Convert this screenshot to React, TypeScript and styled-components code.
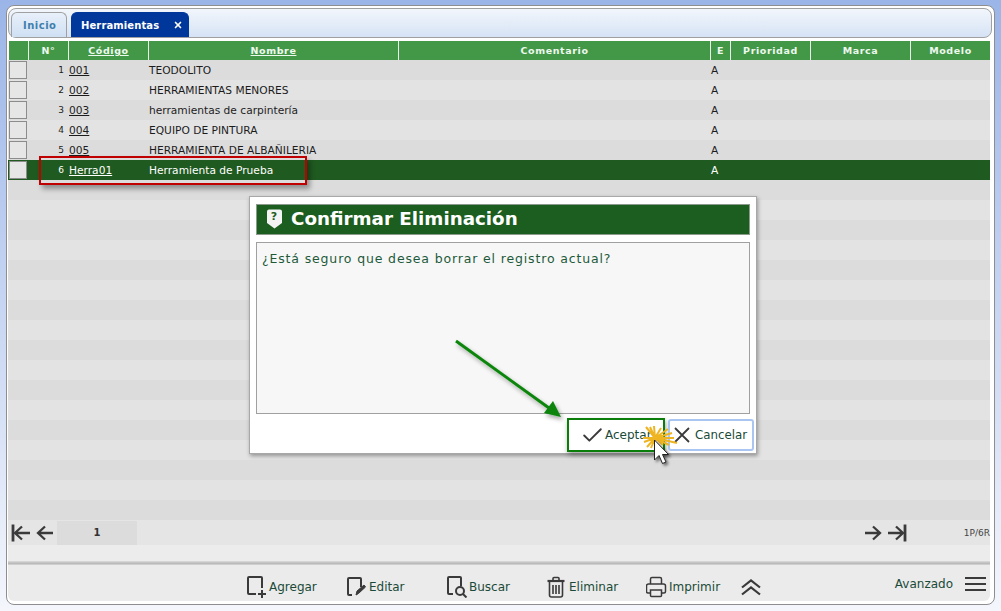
import React from 'react'
import styled, { createGlobalStyle } from 'styled-components'
import { Check, X } from 'lucide-react'

const COLS = '20px 40px 80px 250px 312px 20px 80px 100px 80px'

const records = [
  { n: 1, code: '001', name: 'TEODOLITO' },
  { n: 2, code: '002', name: 'HERRAMIENTAS MENORES' },
  { n: 3, code: '003', name: 'herramientas de carpintería' },
  { n: 4, code: '004', name: 'EQUIPO DE PINTURA' },
  { n: 5, code: '005', name: 'HERRAMIENTA DE ALBAÑILERIA' },
  { n: 6, code: 'Herra01', name: 'Herramienta de Prueba' },
]

const App = () => {
  const blanks = Array.from({ length: 17 }, (_, i) => i + 6)
  return (
    <>
      <GlobalStyle />
      <Frame>
        <TabBar>
          <Tab>Inicio</Tab>
          <Tab $active>
            Herramientas
            <X size={10} strokeWidth={4} />
          </Tab>
        </TabBar>
        <Grid>
          <HeadRow>
            <HeadCell />
            <HeadCell>N°</HeadCell>
            <HeadCell $link>Código</HeadCell>
            <HeadCell $link>Nombre</HeadCell>
            <HeadCell>Comentario</HeadCell>
            <HeadCell>E</HeadCell>
            <HeadCell>Prioridad</HeadCell>
            <HeadCell>Marca</HeadCell>
            <HeadCell>Modelo</HeadCell>
          </HeadRow>
          {records.map((r, i) => (
            <Row key={r.n} $odd={i % 2 === 0} $selected={r.n === 6}>
              <Selector />
              <NumCell>{r.n}</NumCell>
              <Cell>
                <u>{r.code}</u>
              </Cell>
              <Cell>{r.name}</Cell>
              <Cell />
              <Cell>A</Cell>
              <Cell />
              <Cell />
              <Cell />
            </Row>
          ))}
          {blanks.map((i) => (
            <Row key={i} $odd={i % 2 === 0} />
          ))}
        </Grid>
        <Pager>
          <PagerIcon>
            <PagerArrow $toLine />
          </PagerIcon>
          <PagerIcon>
            <PagerArrow />
          </PagerIcon>
          <PageNumber>1</PageNumber>
          <PagerSpacer />
          <PagerIcon>
            <PagerArrow $flip />
          </PagerIcon>
          <PagerIcon>
            <PagerArrow $flip $toLine />
          </PagerIcon>
          <PageInfo>1P/6R</PageInfo>
        </Pager>
        <Spacer />
        <Divider />
        <Toolbar>
          <ToolGroup>
            <ToolButton $width={100}>
              <AddIcon />
              Agregar
            </ToolButton>
            <ToolButton $width={100}>
              <EditIcon />
              Editar
            </ToolButton>
            <ToolButton $width={100}>
              <SearchIcon />
              Buscar
            </ToolButton>
            <ToolButton $width={100} $gap={2}>
              <TrashIcon />
              Eliminar
            </ToolButton>
            <ToolButton $width={95} $gap={2}>
              <PrintIcon />
              Imprimir
            </ToolButton>
            <ChevronsIcon />
          </ToolGroup>
          <Advanced>
            Avanzado
            <BurgerIcon />
          </Advanced>
        </Toolbar>

        <RedMark />
        <Dialog>
          <DialogTitle>
            <ShieldIcon />
            Confirmar Eliminación
          </DialogTitle>
          <DialogBody>¿Está seguro que desea borrar el registro actual?</DialogBody>
          <DialogActions>
            <DialogButton $variant="accept">
              <Check size={25} strokeWidth={1.8} color="#3a3a3a" />
              Aceptar
            </DialogButton>
            <DialogButton $variant="cancel">
              <CloseIcon />
              Cancelar
            </DialogButton>
          </DialogActions>
        </Dialog>
        <GreenArrow />
        <ClickCursor />
      </Frame>
    </>
  )
}

const PagerArrow = ({ $flip, $toLine }: { $flip?: boolean; $toLine?: boolean }) => (
  <ArrowGlyph $flip={$flip} width="24" height="20" viewBox="0 0 24 20" fill="none" stroke="#3a3a3a">
    {$toLine ? (
      <>
        <path d="M4 1.5v17" strokeWidth="2.8" />
        <path d="M6 10h15M13 3.5L6 10l7 6.5" strokeWidth="2.3" />
      </>
    ) : (
      <path d="M5 10h15M12 3.5L5 10l7 6.5" strokeWidth="2.3" />
    )}
  </ArrowGlyph>
)

const AddIcon = () => (
  <svg width="22" height="22" viewBox="0 0 22 22" fill="none" stroke="#3a3a3a" strokeWidth="2">
    <path d="M10 18H3a1 1 0 0 1-1-1V2a1 1 0 0 1 1-1h12a1 1 0 0 1 1 1v10" />
    <path d="M12 18h8M16 14v8" />
  </svg>
)

const EditIcon = () => (
  <svg width="22" height="22" viewBox="0 0 22 22" fill="none" stroke="#3a3a3a" strokeWidth="2">
    <path d="M6 19H3a1 1 0 0 1-1-1V3a1 1 0 0 1 1-1h11a1 1 0 0 1 1 1v8" />
    <path d="M10 19l1-4 7-6 1.5 2-7 6.5z" fill="#3a3a3a" strokeWidth="1" />
  </svg>
)

const SearchIcon = () => (
  <svg width="22" height="22" viewBox="0 0 22 22" fill="none" stroke="#3a3a3a" strokeWidth="2">
    <path d="M7 18H3a1 1 0 0 1-1-1V2a1 1 0 0 1 1-1h11a1 1 0 0 1 1 1v8" />
    <circle cx="14" cy="15" r="4" />
    <path d="M17 18l3.5 3.5" />
  </svg>
)

const TrashIcon = () => (
  <svg width="21" height="22" viewBox="1 0 21 22" fill="none" stroke="#3a3a3a" strokeWidth="1.6">
    <path d="M2.5 5h17" strokeWidth="2.2" />
    <path d="M8 4V2.5a1 1 0 0 1 1-1h4a1 1 0 0 1 1 1V4" />
    <path d="M4.5 6v13a2 2 0 0 0 2 2h9a2 2 0 0 0 2-2V6" />
    <path d="M8 9v9M11 9v9M14 9v9" />
  </svg>
)

const PrintIcon = () => (
  <svg width="21" height="22" viewBox="1 0 21 22" fill="none" stroke="#3a3a3a" strokeWidth="1.5">
    <path d="M5.5 8V3A1.5 1.5 0 0 1 7 1.5h8A1.5 1.5 0 0 1 16.5 3v5" />
    <path d="M5 17H3a1.5 1.5 0 0 1-1.5-1.5V10a2 2 0 0 1 2-2h15a2 2 0 0 1 2 2v5.5A1.5 1.5 0 0 1 19 17h-2" />
    <path d="M5.5 14h11v5.5a1 1 0 0 1-1 1h-9a1 1 0 0 1-1-1z" />
  </svg>
)

const ChevronsIcon = () => (
  <svg width="20" height="17" viewBox="0 0 20 17" fill="none" stroke="#3a3a3a" strokeWidth="2.2">
    <path d="M1 8.5l9-7 9 7M1 15.5l9-7 9 7" />
  </svg>
)

const BurgerIcon = () => (
  <svg width="21" height="14" viewBox="0 0 21 14" fill="none" stroke="#3a3a3a" strokeWidth="2">
    <path d="M0 1h21M0 7h21M0 13h21" />
  </svg>
)

const CloseIcon = () => (
  <svg width="16" height="16" viewBox="0 0 16 16" fill="none" stroke="#3a3a3a" strokeWidth="1.8">
    <path d="M1 1l14 14M15 1L1 15" />
  </svg>
)

const ShieldIcon = () => (
  <ShieldWrap>
    <svg width="17" height="20" viewBox="0 0 17 20">
      <path d="M1 2.5a2 2 0 0 1 2-2h11a2 2 0 0 1 2 2V14l-7.5 5.5L1 14z" fill="#f4f4f4" />
    </svg>
    <ShieldMark>?</ShieldMark>
  </ShieldWrap>
)

const GreenArrow = () => (
  <ArrowSvg width="120" height="90" viewBox="0 0 120 90">
    <defs>
      <filter id="arrowShadow" x="-20%" y="-20%" width="140%" height="140%">
        <feDropShadow dx="2" dy="3" stdDeviation="2" floodColor="#000" floodOpacity="0.35" />
      </filter>
    </defs>
    <g filter="url(#arrowShadow)">
      <path d="M6 6L99 73" stroke="#0a850a" strokeWidth="3" fill="none" />
      <path d="M111 82L94 78L103 66z" fill="#0a850a" />
    </g>
  </ArrowSvg>
)

const ClickCursor = () => (
  <CursorSvg width="44" height="50" viewBox="0 0 44 50">
    <defs>
      <filter id="cursorShadow" x="-40%" y="-30%" width="180%" height="170%">
        <feDropShadow dx="2" dy="2" stdDeviation="1.5" floodColor="#000" floodOpacity="0.55" />
      </filter>
    </defs>
    <path
      d="M19 14L10 3M19 14L14 3M19 14L18 2M19 14L25 4M19 14L32 5M19 14L36 9M19 14L38 14M19 14L41 19M19 14L7 14M19 14L8 18M19 14L11 23M19 14L15 24M19 14L19 25M19 14L27 21M19 14L33 21"
      stroke="#eeb422"
      strokeWidth="2"
    />
    <path
      filter="url(#cursorShadow)"
      d="M18.5 16v20l4.500-4.500 3.500 8 3.500-1.500-3.500-7.500h6z"
      fill="#fff"
      stroke="#222"
      strokeWidth="1"
    />
  </CursorSvg>
)

const GlobalStyle = createGlobalStyle`
  html, body {
    margin: 0;
    height: 100%;
    overflow: hidden;
  }
  body {
    background: linear-gradient(#9bb5e8 0, #c6d5f2 300px, #f4f6fc 611px);
    font-family: "DejaVu Sans", Verdana, sans-serif;
  }
`

const Frame = styled.div`
  position: relative;
  box-sizing: border-box;
  width: 989px;
  height: 600px;
  margin: 5px 0 0 6px;
  padding: 2px 4px 3px 1px;
  background: #fff;
  border: 1px solid #8e8e8e;
  border-radius: 8px;
  display: flex;
  flex-direction: column;
`

const TabBar = styled.div`
  flex: none;
  box-sizing: border-box;
  height: 30px;
  margin-right: -2px;
  padding: 3px 0 0 2px;
  display: flex;
  align-items: flex-end;
  gap: 4px;
  border: 1px solid #a0a0a0;
  border-radius: 8px;
  background: linear-gradient(#f2f6fc, #d6e3f5);
`

const Tab = styled.div<{ $active?: boolean }>`
  box-sizing: border-box;
  height: 25px;
  display: flex;
  align-items: center;
  justify-content: space-between;
  padding: 0 ${(p) => (p.$active ? '5px 0 9px' : '11px')};
  width: ${(p) => (p.$active ? '118px' : '56px')};
  border-radius: 6px 6px 0 0;
  font-size: 10px;
  font-weight: bold;
  letter-spacing: ${(p) => (p.$active ? '0.1px' : '0.5px')};
  color: ${(p) => (p.$active ? '#fff' : '#3f7fae')};
  background: ${(p) => (p.$active ? '#00379b' : 'linear-gradient(#e8f0fa, #cfe0f3)')};
  border: 1px solid ${(p) => (p.$active ? '#00379b' : '#a0a0a0')};
  border-bottom: none;
`

const Grid = styled.div`
  flex: none;
  margin-top: 3px;
`

const HeadRow = styled.div`
  display: grid;
  grid-template-columns: ${COLS};
  height: 19px;
  background: #439848;
  box-shadow: inset 1px 0 0 #fff;
`

const HeadCell = styled.div<{ $link?: boolean }>`
  border-left: 1px solid #e8f2e8;
  font-size: 9.5px;
  font-weight: bold;
  letter-spacing: 0.6px;
  line-height: 19px;
  text-align: center;
  color: #eef8ee;
  text-decoration: ${(p) => (p.$link ? 'underline' : 'none')};
  &:first-child {
    border-left: none;
  }
`

const Row = styled.div<{ $odd?: boolean; $selected?: boolean }>`
  display: grid;
  grid-template-columns: ${COLS};
  height: 20px;
  background: ${(p) => (p.$selected ? '#1f5a20' : p.$odd ? '#dcdcdc' : '#e3e3e3')};
  color: ${(p) => (p.$selected ? '#fff' : '#1c1c1c')};
  font-size: 10.65px;
  line-height: 22px;
`

const Selector = styled.div`
  box-sizing: border-box;
  width: 18px;
  height: 18px;
  margin: 1px 0 0 1px;
  background: #e6e6e6;
  border: 1px solid #8c8c8c;
`

const Cell = styled.div`
  padding-left: 1px;
  white-space: nowrap;
`

const NumCell = styled.div`
  font-size: 9px;
  line-height: 20px;
  text-align: right;
  padding-right: 4px;
`

const Pager = styled.div`
  flex: none;
  display: flex;
  align-items: center;
  height: 25px;
  padding-left: 1px;
  background: #e5e5e5;
  color: #333;
`

const PagerIcon = styled.div`
  width: 24px;
  height: 20px;
`

const ArrowGlyph = styled.svg<{ $flip?: boolean }>`
  display: block;
  transform: ${(p) => (p.$flip ? 'scaleX(-1)' : 'none')};
`

const PageNumber = styled.div`
  width: 80px;
  height: 24px;
  line-height: 24px;
  background: #dcdcdc;
  text-align: center;
  font-size: 10px;
  font-weight: bold;
`

const PagerSpacer = styled.div`
  flex: 1;
`

const PageInfo = styled.div`
  width: 81px;
  text-align: right;
  font-size: 9px;
  color: #444;
`

const Spacer = styled.div`
  flex: 1;
  background: #ececec;
`

const Divider = styled.div`
  flex: none;
  height: 4px;
  background: linear-gradient(#dcdcdc, #b8b8b8 60%, #d8d8d8);
`

const Toolbar = styled.div`
  flex: none;
  box-sizing: border-box;
  height: 36px;
  display: flex;
  align-items: center;
  padding: 8px 4px 0 238px;
  background: #ebebeb;
  border-radius: 0 0 6px 6px;
  color: #1a4a38;
  font-size: 12px;
`

const ToolGroup = styled.div`
  flex: 1;
  display: flex;
  align-items: center;
`

const ToolButton = styled.div<{ $width: number; $gap?: number }>`
  width: ${(p) => p.$width}px;
  display: flex;
  align-items: center;
  gap: ${(p) => p.$gap ?? 1}px;
`

const Advanced = styled.div`
  display: flex;
  align-items: center;
  gap: 12px;
  margin-top: -6px;
`

const RedMark = styled.div`
  position: absolute;
  left: 32px;
  top: 150px;
  width: 268px;
  height: 29px;
  box-sizing: border-box;
  border: 2px solid #c00000;
  box-shadow: 3px 4px 5px rgba(0, 0, 0, 0.35);
`

const Dialog = styled.div`
  position: absolute;
  left: 242px;
  top: 190px;
  box-sizing: border-box;
  width: 508px;
  height: 258px;
  padding: 7px 6px 1px;
  background: #fff;
  border: 1px solid #a8a8a8;
  box-shadow: 1px 2px 4px rgba(0, 0, 0, 0.35);
  display: flex;
  flex-direction: column;
`

const DialogTitle = styled.div`
  flex: none;
  height: 31px;
  box-sizing: border-box;
  display: flex;
  align-items: center;
  gap: 8px;
  padding: 0 0 2px 9px;
  background: #1c5d20;
  border: 1px solid #8b9a8b;
  color: #fff;
  font-size: 18.3px;
  font-weight: bold;
`

const ShieldWrap = styled.div`
  position: relative;
  width: 17px;
  height: 20px;
`

const ShieldMark = styled.span`
  position: absolute;
  left: 0;
  right: 1px;
  top: 2px;
  text-align: center;
  font-size: 11px;
  line-height: 12px;
  color: #1c5d20;
`

const DialogBody = styled.div`
  flex: 1;
  margin-top: 7px;
  padding: 8px 5px;
  background: #f7f7f7;
  border: 1px solid #a0a0a0;
  color: #1d5a3a;
  font-size: 12.5px;
  letter-spacing: 0.85px;
`

const DialogActions = styled.div`
  flex: none;
  height: 34px;
  margin: 4px -4px 0 0;
  display: flex;
  align-items: center;
  justify-content: flex-end;
  gap: 3px;
`

const DialogButton = styled.div<{ $variant: 'accept' | 'cancel' }>`
  box-sizing: border-box;
  height: ${(p) => (p.$variant === 'accept' ? '34px' : '32px')};
  width: ${(p) => (p.$variant === 'accept' ? '98px' : '86px')};
  display: flex;
  align-items: center;
  gap: ${(p) => (p.$variant === 'accept' ? '0' : '5px')};
  padding-left: ${(p) => (p.$variant === 'accept' ? '11px' : '4px')};
  background: #fff;
  color: #1a4a38;
  font-size: ${(p) => (p.$variant === 'accept' ? '12px' : '11.8px')};
  border: 2px solid ${(p) => (p.$variant === 'accept' ? '#0a7d0a' : '#a9c5f2')};
  border-radius: ${(p) => (p.$variant === 'accept' ? '0' : '3px')};
  box-shadow: ${(p) => (p.$variant === 'accept' ? '1px 3px 5px rgba(0,0,0,.35)' : 'none')};
`

const ArrowSvg = styled.svg`
  position: absolute;
  left: 443px;
  top: 329px;
  overflow: visible;
`

const CursorSvg = styled.svg`
  position: absolute;
  left: 629px;
  top: 418px;
  overflow: visible;
`

export default App
